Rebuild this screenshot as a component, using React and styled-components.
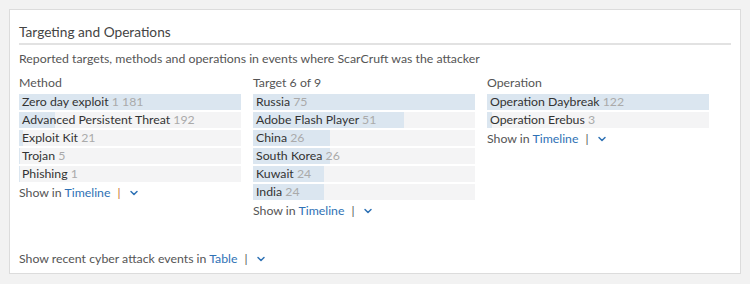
import * as React from "react"
import styled, { createGlobalStyle } from "styled-components"
import { ChevronDown } from "lucide-react"

const columns = [
  {
    title: "Method",
    items: [
      { label: "Zero day exploit", count: 1181, shown: "1 181" },
      { label: "Advanced Persistent Threat", count: 192 },
      { label: "Exploit Kit", count: 21 },
      { label: "Trojan", count: 5 },
      { label: "Phishing", count: 1 },
    ],
    activeSep: true,
  },
  {
    title: "Target 6 of 9",
    items: [
      { label: "Russia", count: 75 },
      { label: "Adobe Flash Player", count: 51 },
      { label: "China", count: 26 },
      { label: "South Korea", count: 26 },
      { label: "Kuwait", count: 24 },
      { label: "India", count: 24 },
    ],
  },
  {
    title: "Operation",
    items: [
      { label: "Operation Daybreak", count: 122 },
      { label: "Operation Erebus", count: 3 },
    ],
  },
]

const App = () => {
  return (
    <>
      <GlobalStyle />
      <Card>
        <Title>Targeting and Operations</Title>
        <Subtitle>
          Reported targets, methods and operations in events where ScarCruft was the attacker
        </Subtitle>
        <Columns>
          {columns.map((col) => {
            const max = Math.max(...col.items.map((i) => i.count))
            return (
              <Column key={col.title}>
                <ColumnTitle>{col.title}</ColumnTitle>
                {col.items.map((item) => (
                  <Bar key={item.label}>
                    <Fill style={{ width: `${(item.count / max) * 100}%` }} />
                    <Label>
                      {item.label} <Count>{item.shown || item.count}</Count>
                    </Label>
                  </Bar>
                ))}
                <ShowLine>
                  Show in <LinkText>Timeline</LinkText>
                  <Sep active={col.activeSep}>|</Sep>
                  <Chevron size={12} strokeWidth={3} />
                </ShowLine>
              </Column>
            )
          })}
        </Columns>
        <Footer>
          Show recent cyber attack events in <LinkText>Table</LinkText>
          <Sep>|</Sep>
          <Chevron size={12} strokeWidth={3} />
        </Footer>
      </Card>
    </>
  )
}
export default App

const GlobalStyle = createGlobalStyle`
  html, body {
    margin: 0;
    background: #f2f2f2;
  }
  body {
    padding: 9px;
    font-family: Lato, "Open Sans", sans-serif;
  }
`

const Card = styled.div`
  box-sizing: border-box;
  width: 732px;
  height: 265px;
  background: #fff;
  border: 1px solid #dcdcdc;
  padding: 12px 9px 0 9px;
`

const Title = styled.div`
  font-size: 13.7px;
  line-height: 20px;
  color: #444;
  padding-bottom: 1px;
  border-bottom: 2px solid #e2e2e2;
`

const Subtitle = styled.div`
  font-size: 12.3px;
  line-height: 18px;
  color: #555;
  margin-top: 5px;
`

const Columns = styled.div`
  display: grid;
  grid-template-columns: repeat(3, 222px);
  column-gap: 12px;
  margin-top: 6px;
`

const Column = styled.div`
  display: flex;
  flex-direction: column;
`

const ColumnTitle = styled.div`
  font-size: 12.3px;
  line-height: 18px;
  color: #555;
  margin-bottom: 2px;
`

const Bar = styled.div`
  position: relative;
  height: 16px;
  margin-bottom: 2px;
  background: #f4f4f5;
`

const Fill = styled.div`
  position: absolute;
  left: 0;
  top: 0;
  bottom: 0;
  background: #dbe6f0;
`

const Label = styled.div`
  position: relative;
  font-size: 12.3px;
  line-height: 16px;
  color: #333;
  padding-left: 3px;
  white-space: nowrap;
`

const Count = styled.span`
  color: #aaa;
`

const ShowLine = styled.div`
  font-size: 12.3px;
  line-height: 18px;
  color: #555;
  white-space: nowrap;
`

const LinkText = styled.span`
  color: #2f72b5;
`

const Sep = styled.span`
  color: ${({ active }) => (active ? "#c8682e" : "#555")};
  margin: 0 7px 0 7px;
`

const Chevron = styled(ChevronDown)`
  color: #2f72b5;
  vertical-align: -2px;
`

const Footer = styled(ShowLine)`
  margin-top: 30px;
`
